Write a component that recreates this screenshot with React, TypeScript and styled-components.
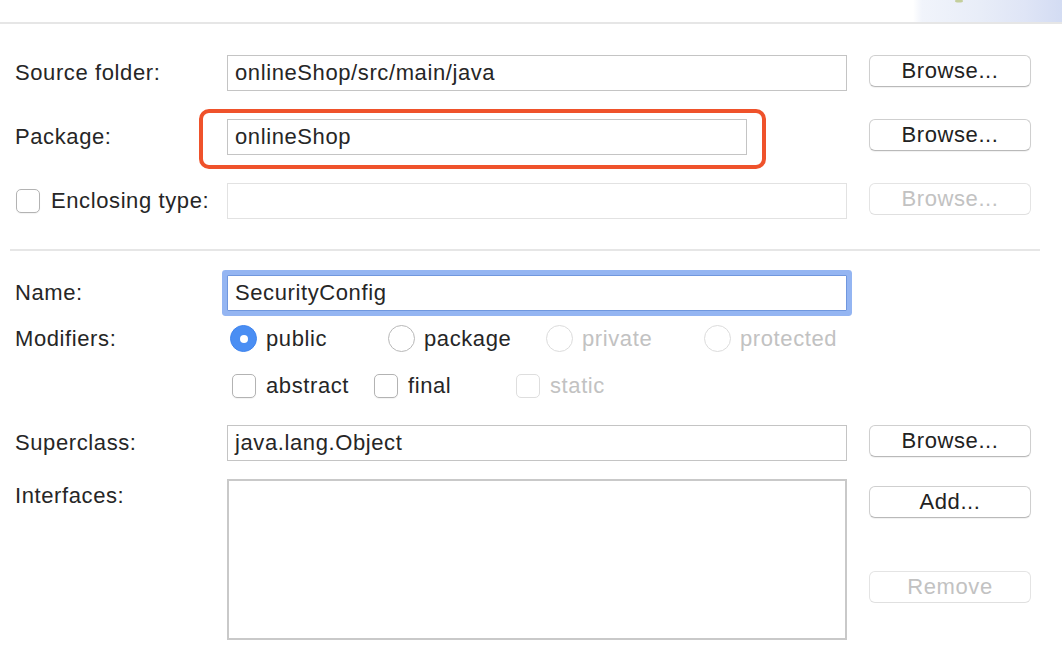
import React from 'react';
import styled, { createGlobalStyle, css } from 'styled-components';

const GlobalStyle = createGlobalStyle`
  html, body {
    margin: 0;
    padding: 0;
    background: #ffffff;
  }
  body {
    font-family: 'Liberation Sans', Arial, sans-serif;
    font-size: 22px;
    letter-spacing: 0.6px;
    color: #262626;
  }
`;

const Page = styled.div`
  width: 1062px;
  height: 650px;
  overflow: hidden;
  background: #ffffff;
`;

const Header = styled.div`
  height: 22px;
  border-bottom: 2px solid #e6e6e6;
  display: flex;
  justify-content: flex-end;
`;

const Banner = styled.div`
  position: relative;
  width: 149px;
  height: 22px;
  background: linear-gradient(90deg, rgba(244, 246, 252, 0) 0%, #f1f4fb 6%, #e8edf8 45%, #dfe5f6 75%, #d3dcf3 100%);
`;

const BannerDisc = styled.svg`
  position: absolute;
  top: 0;
  left: 0;
`;

const Form = styled.div`
  padding: 31px 0 0 10px;
`;

const Row = styled.div<{ $top?: number; $align?: string }>`
  display: grid;
  grid-template-columns: 195px 620px 162px;
  column-gap: 22px;
  align-items: ${(p) => p.$align || 'center'};
  margin-top: ${(p) => p.$top ?? 0}px;
`;

const Label = styled.div<{ $top?: number }>`
  padding-left: 5px;
  white-space: nowrap;
  ${(p) =>
    p.$top !== undefined &&
    css`
      padding-top: ${p.$top}px;
    `}
`;

const CheckLabel = styled.label`
  display: flex;
  align-items: center;
  gap: 11px;
  padding-left: 6px;
  white-space: nowrap;
`;

const Field = styled.div<{ $disabled?: boolean; $focused?: boolean; $h?: number }>`
  box-sizing: border-box;
  height: ${(p) => p.$h ?? 36}px;
  border: 1px solid ${(p) => (p.$disabled ? '#e2e2e2' : '#c4c4c4')};
  background: #ffffff;
  padding: 0 7px;
  display: flex;
  align-items: center;
  white-space: nowrap;
  ${(p) =>
    p.$focused &&
    css`
      border-color: #7097de;
      box-shadow: 0 0 0 5px #94b5f2;
      border-radius: 1px;
    `}
`;

const ListBox = styled.div`
  box-sizing: border-box;
  height: 161px;
  border: 2px solid #c9c9c9;
  background: #ffffff;
`;

const Button = styled.button<{ $disabled?: boolean }>`
  box-sizing: border-box;
  width: 162px;
  height: 32px;
  margin-top: -4px;
  border: 1px solid ${(p) => (p.$disabled ? '#e4e4e4' : '#cfcfcf')};
  border-bottom-color: ${(p) => (p.$disabled ? '#e0e0e0' : '#b9b9b9')};
  border-radius: 6px;
  background: #ffffff;
  box-shadow: ${(p) => (p.$disabled ? 'none' : '0 1px 1px rgba(0, 0, 0, 0.06)')};
  font-family: inherit;
  font-size: 22px;
  letter-spacing: 0.6px;
  color: ${(p) => (p.$disabled ? '#c2c2c2' : '#222222')};
  padding: 0;
  line-height: 30px;
  text-align: center;
`;

const ButtonStack = styled.div`
  display: flex;
  flex-direction: column;
  gap: 57px;
  padding-top: 11px;
`;

const Box = styled.span<{ $disabled?: boolean }>`
  box-sizing: border-box;
  width: 24px;
  height: 24px;
  border: 1px solid ${(p) => (p.$disabled ? '#dedede' : '#b3b3b3')};
  border-radius: 5px;
  background: #ffffff;
  box-shadow: ${(p) => (p.$disabled ? 'none' : '0 1px 1px rgba(0, 0, 0, 0.05)')};
  flex: none;
`;

const Radio = styled.span<{ $checked?: boolean; $disabled?: boolean }>`
  box-sizing: border-box;
  width: 27px;
  height: 27px;
  border-radius: 50%;
  flex: none;
  border: 1px solid ${(p) => (p.$checked ? '#3f84ee' : p.$disabled ? '#dcdcdc' : '#b8b8b8')};
  background: ${(p) => (p.$checked ? '#4a8ef3' : '#ffffff')};
  display: flex;
  align-items: center;
  justify-content: center;
  &::after {
    content: '';
    display: ${(p) => (p.$checked ? 'block' : 'none')};
    width: 8px;
    height: 8px;
    border-radius: 50%;
    background: #ffffff;
  }
`;

const Option = styled.span<{ $disabled?: boolean; $w: number; $gap?: number }>`
  display: flex;
  flex: none;
  align-items: center;
  gap: ${(p) => p.$gap ?? 9}px;
  width: ${(p) => p.$w}px;
  color: ${(p) => (p.$disabled ? '#c2c2c2' : '#262626')};
  white-space: nowrap;
`;

const Options = styled.div<{ $pad?: number }>`
  display: flex;
  align-items: center;
  padding-left: ${(p) => p.$pad ?? 3}px;
`;

const Separator = styled.div`
  height: 2px;
  background: #e6e6e6;
  margin: 30px 22px 0 0;
`;

const Highlight = styled.div`
  position: relative;
  width: 520px;
`;

const RedFrame = styled.div`
  position: absolute;
  left: -28px;
  right: -19px;
  top: -10px;
  bottom: -14px;
  border: 4px solid #ef522b;
  border-radius: 10px;
  pointer-events: none;
`;

export default function App() {
  return (
    <Page>
      <GlobalStyle />
      <Header>
        <Banner>
          <BannerDisc width="149" height="22" viewBox="0 0 149 22">
            <defs>
              <radialGradient id="disc" cx="50%" cy="0%" r="60%">
                <stop offset="0%" stopColor="#f0f0ee" />
                <stop offset="80%" stopColor="#d8d9d5" />
                <stop offset="100%" stopColor="#cfd0cc" stopOpacity="0" />
              </radialGradient>
            </defs>
            <ellipse cx="46" cy="-2" rx="42" ry="6" fill="url(#disc)" />
            <ellipse cx="46" cy="1" rx="4" ry="1.5" fill="#c4cf9c" />
          </BannerDisc>
        </Banner>
      </Header>

      <Form>
        <Row>
          <Label>Source folder:</Label>
          <Field>onlineShop/src/main/java</Field>
          <Button>Browse...</Button>
        </Row>
        <Row $top={28}>
          <Label>Package:</Label>
          <Highlight>
            <Field>onlineShop</Field>
            <RedFrame />
          </Highlight>
          <Button>Browse...</Button>
        </Row>
        <Row $top={28}>
          <CheckLabel>
            <Box />
            Enclosing type:
          </CheckLabel>
          <Field $disabled />
          <Button $disabled>Browse...</Button>
        </Row>

        <Separator />

        <Row $top={24}>
          <Label>Name:</Label>
          <Field $focused>SecurityConfig</Field>
        </Row>
        <Row $top={14}>
          <Label>Modifiers:</Label>
          <Options>
            <Option $w={158}>
              <Radio $checked />
              public
            </Option>
            <Option $w={158}>
              <Radio />
              package
            </Option>
            <Option $w={158} $disabled>
              <Radio $disabled />
              private
            </Option>
            <Option $w={150} $disabled>
              <Radio $disabled />
              protected
            </Option>
          </Options>
        </Row>
        <Row $top={21}>
          <div />
          <Options $pad={5}>
            <Option $w={142} $gap={10}>
              <Box />
              abstract
            </Option>
            <Option $w={142} $gap={10}>
              <Box />
              final
            </Option>
            <Option $w={120} $gap={10} $disabled>
              <Box $disabled />
              static
            </Option>
          </Options>
        </Row>
        <Row $top={26}>
          <Label>Superclass:</Label>
          <Field>java.lang.Object</Field>
          <Button>Browse...</Button>
        </Row>
        <Row $top={18} $align="start">
          <Label $top={4}>Interfaces:</Label>
          <ListBox />
          <ButtonStack>
            <Button>Add...</Button>
            <Button $disabled>Remove</Button>
          </ButtonStack>
        </Row>
      </Form>
    </Page>
  );
}
